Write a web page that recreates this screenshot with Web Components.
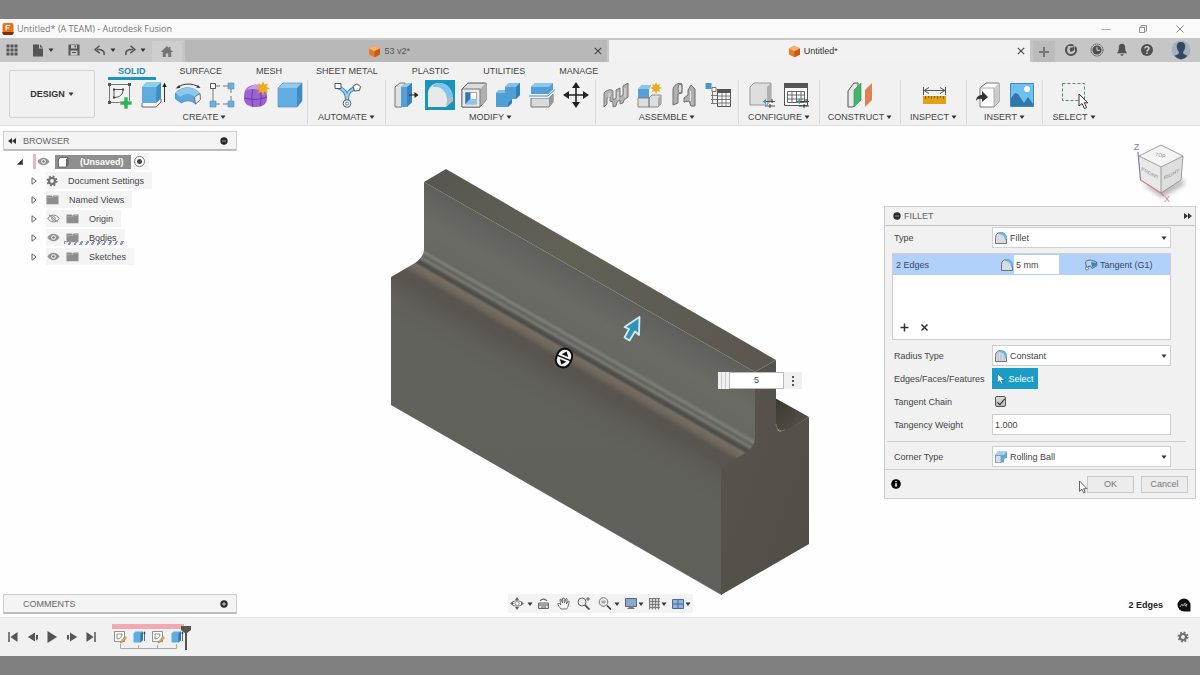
<!DOCTYPE html>
<html lang="en">
<head>
<meta charset="utf-8">
<title>Untitled* (A TEAM) - Autodesk Fusion</title>
<style>
  html { height: 100%; }
  body {
    margin: 0; min-height: 100%; box-sizing: border-box; padding: 19px 0;
    background: #808080; color: #444;
    font: 9px/12px "Liberation Sans", Arial, sans-serif;
    display: flex; flex-direction: column;
  }
</style>
</head>
<body>
<fusion-app></fusion-app>
<script>
const BASE = `
  *, *::before { box-sizing: border-box; }
  button, input, select { font: inherit; color: inherit; margin: 0; }
  button { border: 0; padding: 0; background: none; display: inline-flex; align-items: center; justify-content: center; cursor: pointer; }
  a { color: inherit; text-decoration: none; }
`;

function define(tag, css, html, init) {
  const template = document.createElement('template');
  template.innerHTML = `<style>${BASE}${css}</style>${html}`;
  customElements.define(tag, class extends HTMLElement {
    constructor() {
      super();
      this.attachShadow({ mode: 'open' }).append(template.content.cloneNode(true));
    }
    connectedCallback() { if (init) init.call(this, this.shadowRoot); }
  });
}

/* name: [width, height, drawing] */
const cubeBlue = `<path d="M2 7 7 2h19v18l-5 6H2z" fill="#62aee2"/><path d="M2 7 7 2h19l-5 5z" fill="#93cbf0"/><path d="m21 7 5-5v18l-5 6z" fill="#3d8cc6"/><path d="M2 7 7 2h19v18l-5 6H2z" fill="none" stroke="#5593c0" stroke-width=".7"/>`;
const miniFillet = `<path d="M1.500 12.500v-6C1.500 3 4 1.500 6.500 1.500c4 0 6 3 6 6v5z" fill="#d9dde1" stroke="#666" stroke-width=".9"/><path d="M5 1.500c5-.8 8 2 8 6.500l-2 1.500C11 5.500 9 3.500 5 3z" fill="#69b6e6"/>`;
const ICONS = {
  logo: [12, 14, `<rect x=".5" y="1" width="11" height="12" rx="2" fill="#e8731c"/><path d="M.5 10h11v1a2 2 0 0 1-2 2h-7a2 2 0 0 1-2-2z" fill="#7b2d10"/><path d="M4.200 8.500V3.500h4M4.200 6h3" stroke="#fff" fill="none" stroke-width="1.200"/>`],
  min: [10, 10, `<path d="M.5 5.500h9" stroke="#aaa"/>`],
  restore: [10, 10, `<path d="M1.500 3.500h5v5h-5zM3 3V1.500h5.500V7H7" fill="none" stroke="#777" stroke-width=".8"/>`],
  close: [10, 10, `<path d="m1.500 1.500 7 7m0-7-7 7" stroke="#777" stroke-width=".9"/>`],
  tabclose: [8, 8, `<path d="m.8.800 6.400 6.400m0-6.400L.8 7.200" stroke="#444" stroke-width="1.100"/>`],
  apps: [12, 12, `<g fill="#555"><path d="M.5.500h3v3h-3zM4.500.500h3v3h-3zM8.500.500h3v3h-3zM.5 4.500h3v3h-3zM4.500 4.500h3v3h-3zM8.500 4.500h3v3h-3zM.5 8.500h3v3h-3zM4.500 8.500h3v3h-3zM8.500 8.500h3v3h-3z"/></g>`],
  file: [12, 13, `<path d="M1 .5h6v4h4v8H1z" fill="#555"/><path d="M8 .5 11 3.500H8z" fill="#555"/>`],
  save: [12, 12, `<path d="M.5.500h11v11h-11z" fill="#555"/><path d="M3 1v3.500h6V1M2.500 11.500v-5h7v5" fill="#c6c6c6"/><path d="M6.500 1.500H8v2H6.500zM4 8h4v1H4z" fill="#555"/>`],
  undo: [12, 11, `<path d="M10 10c1-4-2-6-7-5.500" fill="none" stroke="#555" stroke-width="1.500"/><path d="M5.500.800 1 4.600l4.700 3.600" fill="none" stroke="#555" stroke-width="1.500"/>`],
  redo: [12, 11, `<path d="M2 10c-1-4 2-6 7-5.500" fill="none" stroke="#555" stroke-width="1.500"/><path d="M6.500.800 11 4.600 6.300 8.200" fill="none" stroke="#555" stroke-width="1.500"/>`],
  caret: [6, 6, `<path d="M.5 1.500h5L3 5z" fill="#333"/>`],
  home: [14, 13, `<path d="M7 1 .8 7h2v5h3V8.500h2.400V12h3V7h2L10.500 4.500V2H9v1z" fill="#757575"/>`],
  doc: [13, 13, `<path d="m1 3.500 5.500-2.800 5.500 2.800v6L6.500 12.300 1 9.500z" fill="#e87a24"/><path d="m1 3.500 5.500-2.800 5.500 2.800-5.500 2.700z" fill="#f8b26a"/><path d="M6.500 6.200v6.100L12 9.500v-6z" fill="#c65c14"/>`],
  plus: [12, 12, `<path d="M6 1v10M1 6h10" stroke="#777" stroke-width="2"/>`],
  ext: [14, 14, `<circle cx="7" cy="7" r="5" fill="none" stroke="#505050" stroke-width="2.200"/><path d="M5 6.500 3.500 2.500l3 1 2-.5L12 1.500l-1.500 4L11 9 7.500 9.500 5 9z" fill="#c6c6c6"/><path d="m6.500 9-1-3 1.200-1.800 1.500.6L9.800 3l.7 2.600L9.200 8z" fill="#505050"/>`],
  clock: [14, 14, `<circle cx="7" cy="7" r="6" fill="none" stroke="#505050" stroke-width="1" stroke-dasharray="1.500 .6"/><circle cx="7" cy="7" r="4.600" fill="#505050"/><path d="M7 4v3.300h2.800" stroke="#ddd" fill="none"/>`],
  bell: [12, 14, `<path d="M6 .8c-2 0-3.200 1.600-3.200 4C2.800 8 2 9 .8 10.300h10.400C10 9 9.200 8 9.200 4.800c0-2.400-1.200-4-3.200-4zM4.500 11.200h3c0 2-3 2-3 0z" fill="#505050"/>`],
  help: [14, 14, `<circle cx="7" cy="7" r="6" fill="#505050"/><path d="M5 5.500C5 3 9 3 9 5.400 9 7 7 6.800 7 8.500M7 9.500v1.500" fill="none" stroke="#ddd" stroke-width="1.400"/>`],
  avatar: [20, 20, `<circle cx="10" cy="10" r="9.500" fill="#a3b1c2"/><path d="M10 2c-3 0-4.500 2.200-4.200 5 .2 2.300 1.200 4 2.200 5l-.5 2-4 1.800A9.500 9.500 0 0 0 10 19.500a9.500 9.500 0 0 0 6.500-3.700l-4-1.800-.5-2c1-1 2-2.700 2.200-5C14.500 4.200 13 2 10 2z" fill="#33475f"/>`],

  sketch: [28, 28, `<path d="M3.500 3.500h20v18h-20z" fill="none" stroke="#777"/><path d="M2 2h3v3H2zM22 2h3v3h-3zM2 20h3v3H2z" fill="#555"/><path d="M8 16.500v-8h9c0 5-3 8-9 8z" fill="none" stroke="#555"/><path d="M7 7.500h2v2H7zM16 7.500h2v2h-2zM7 15.500h2v2H7z" fill="#444"/><path d="M18 16h4v4h4v4h-4v4h-4v-4h-4v-4h4z" fill="#2fb457" stroke="#f1f1f1" stroke-width=".6"/>`],
  extrude: [28, 28, `<path d="M2 22v4h14l5-5v-3H8z" fill="#f6f6f6" stroke="#666"/><path d="M2 6 6 1.500h15V17l-5 5H2z" fill="#60acdf"/><path d="M2 6 6 1.500h15L16.500 6z" fill="#94ccef"/><path d="m16.500 6 4.500-4.500V17l-5 5z" fill="#3d8cc6"/><path d="M24.500 21V4" stroke="#333"/><path d="m22.300 6 2.200-4.500L26.700 6z" fill="#222"/>`],
  revolve: [28, 28, `<path d="M1.500 12c7-7 17-7 24 0l1 6-5 5c-4-4-10-4-14-1L1.500 18z" fill="#5aa8de" stroke="#397fb4" stroke-width=".7"/><path d="M1.500 12c7-7 17-7 24 0l-5 4c-4-4-10-4-14 0z" fill="#8cc7ee"/><path d="m20.500 16 5.500-3.500.5 6-5 4.500z" fill="#eee" stroke="#666" stroke-width=".8"/><path d="M3 6.500C10 2 18 2 25 6" fill="none" stroke="#333"/><path d="m1.500 7.500 4-3.500.8 3zM26.500 7l-4.400-.5L24 4z" fill="#333"/>`],
  pattern: [28, 28, `<path d="M5 8v12M8 5h4M15 5h5M8 23h4M15 23h5M23 8v4M23 15v5" stroke="#777"/><path d="M2.500 2.500h5v5h-5z" fill="#fff" stroke="#555"/><path d="M20 2h6v6h-6zM2 20h6v6H2zM20 20h6v6h-6z" fill="#6eaedb" stroke="#4f91c0" stroke-width=".6"/>`],
  form: [28, 28, `<path d="M3 10c2-5 8-7 14-6 7 1 8 7 8 13s-4 9-11 9S2 23 2 18c0-3 0-5 1-8z" fill="#9b62d1"/><path d="M4 10c4-3 9-2 13-1 0-3 2-4 5-3-3-3-13-4-18 4z" fill="#c59cec"/><path d="M3 17c7 2 14 2 22-1M11 9c-2 5-1 12 0 17M18 10c2 5 1 11 0 15" stroke="#6d3aa5" fill="none"/><path d="m21 0 1.300 3.500L26 2.500l-1.600 3.300L28 7.500l-3.600 1.300L26 12l-3.700-1L21 14.500 19.700 11 16 12l1.500-3.200L14 7.500l3.500-1.700L16 2.500l3.700 1z" fill="#efab1e"/>`],
  box: [28, 28, cubeBlue],
  automate: [28, 28, `<path d="M5 6c6 3 9 5 9 14 0-9 3-11 9-13" fill="none" stroke="#4287bd" stroke-width="4"/><path d="M5 6c6 3 9 5 9 14 0-9 3-11 9-13" fill="none" stroke="#9ccbe9" stroke-width="2"/><path d="M2 2.500h6v5H2z" fill="#fff" stroke="#555"/><path d="m20 5 4-2 3.500 2.500-1 4-5 .5z" fill="#fff" stroke="#555"/><circle cx="14" cy="22.500" r="3.800" fill="#fff" stroke="#555"/><circle cx="14" cy="22.500" r="1.500" fill="none" stroke="#4287bd"/>`],
  press: [28, 28, `<path d="m3 6 5-4h5v20l-3 4H3z" fill="#e1e1e1" stroke="#777"/><path d="m9 6 5-4h6v19l-5 5H9z" fill="#559fd6"/><path d="m9 6 5-4h6l-5 4z" fill="#93cbf0"/><path d="m15 6 5-4v19l-5 5z" fill="#3883bd"/><path d="M17 14h7" stroke="#222"/><path d="m22.500 11 4 3-4 3z" fill="#222"/>`],
  fillet: [30, 30, `<path d="M0 0h30v30H0z" fill="#1695bd"/><path d="M3 26V14C3 6 9 3 14 3c8 0 13 6 13 14v4l-6 6H3z" fill="#dedede"/><path d="M8 5c5-4 18-3 20 11l-6 5C22 12 17 7 8 7z" fill="#7fc4ec"/><path d="M3 27V14C3 9 6 7 10 7c8 0 12 6 12 15l-2 5z" fill="#e9e9e9"/><path d="m22 21 6-5v5l-7 6z" fill="#bbb"/>`],
  shell: [28, 28, `<path d="m2 8 6-6h18v17l-6 7H2z" fill="#dcdcdc" stroke="#555"/><path d="m20 8 6-6v17l-6 7z" fill="#b0b0b0"/><path d="M2 8h18v18H2z" fill="#e9e9e9" stroke="#777"/><path d="M5.500 11.500h11V23h-11z" fill="#fff" stroke="#777" stroke-width=".6"/><path d="M5.500 11.500v11.500l5-5v-6.500z" fill="#2d76b3"/><path d="M5.500 23 10.500 18h6v5z" fill="#8cc7ee"/>`],
  combine: [28, 28, `<path d="m2 12 3-3h6V6l4-4h11v12l-4 4h-4v4l-4 4H2z" fill="#4f9ed7"/><path d="m11 6 4-4h11l-4 4zM2 12l3-3h6v3z" fill="#83c0ea"/><path d="m22 6 4-4v12l-4 4zM14 22l4-4v4l-4 4z" fill="#347fba"/>`],
  split: [28, 28, `<path d="m3 6 4-4h18v7l-4 4H3z" fill="#559fd6"/><path d="m3 6 4-4h18l-4 4z" fill="#8cc7ee"/><path d="M3 17h18l4-4v8l-4 5H3z" fill="#dadada" stroke="#777"/><path d="m21 17 4-4v8l-4 5z" fill="#999"/><path d="M1 15.500h19l7-7" fill="none" stroke="#f1f1f1" stroke-width="3"/><path d="M1 15h19l7-6.500" fill="none" stroke="#4b93c9"/>`],
  move: [28, 28, `<path d="M14 3v22M3 14h22" stroke="#222" stroke-width="1.600"/><path d="m14 1-4 6h8zM14 27l-4-6h8zM1 14l6-4v8zM27 14l-6-4v8z" fill="#222"/>`],
  snap: [28, 28, `<path d="M2 26V13c0-3 7-6 9-3v9l3-2V9l4-2v9l3-2V5l5-3v14l-4 3-1 3-3 1v-4l-3 2-1 4-3 1v-5l-3-1v-4l-3 1v6z" fill="#b4b4b4" stroke="#6d6d6d" stroke-width=".9"/><path d="M7 12v6M16 11v8M23 7v9" stroke="#e5e5e5"/>`],
  component: [28, 28, `<path d="m2 8 4-4h9l-2 4v9H2z" fill="#579fd5"/><path d="m2 8 4-4h9l-2 4z" fill="#8cc7ee"/><path d="M2 17h11v9H2zM13 17l3-3h9v9l-3 3h-9z" fill="#dedede" stroke="#777" stroke-width=".8"/><path d="m22 17 3-3v9l-3 3z" fill="#aaa"/><path d="m20 1 1.200 3L24 3l-1 2.800L26 7l-3 1.200L24 11l-2.800-1L20 13l-1.200-3-2.800 1 1-2.800L14 7l3-1.200L16 3l2.800 1z" fill="#efab1e"/>`],
  joint: [28, 28, `<path d="M3 24V9c0-5 6-8 9-6v9l-4 1v9zM25 25V8l-4-4-3 5v5l-4 3v4l5-1 2 5z" fill="#b0b0b0" stroke="#6e6e6e"/><ellipse cx="10" cy="7.500" rx="2" ry="4.500" fill="#dcdcdc" stroke="#777"/><path d="M20.500 10v10" stroke="#e5e5e5"/>`],
  bom: [28, 28, `<path d="M8.500 8v15M7 14.500h6M7 18.500h6M7 22.500h6" stroke="#777" fill="none"/><path d="M1.500 2h6v6h-6z" fill="#4f93c8"/><path d="M8 6.500h4v4H8z" fill="#fff" stroke="#777"/><path d="M13.500 8.500h13v17h-13z" fill="#fff" stroke="#555"/><path d="M13 8h14v4H13z" fill="#555"/><path d="M13.500 15h13M13.500 18.500h13M13.500 22h13M18 12v13.500M22 12v13.500" stroke="#777"/>`],
  config: [28, 28, `<path d="m2 6 4-4h17v17l-4 5H2z" fill="#dedede" stroke="#999"/><path d="m19 6 4-4v17l-4 5z" fill="#aeaeae"/><path d="M15 20.500h12M17 25h10" stroke="#555" stroke-width="1.200"/><path d="m18 17.500-3 3 3 3" fill="#4691bc"/><path d="M24 18v4M22 23v4" stroke="#333"/>`],
  configtable: [28, 28, `<path d="M2.500 2.500h23v22h-23z" fill="#fff" stroke="#555"/><path d="M2 2h24v5H2z" fill="#555"/><path d="M5.500 10.500h17v11h-17zM5.500 14h17M5.500 18h17M10 10.500v11M14.500 10.500v11M19 10.500v11" fill="none" stroke="#666"/><path d="M15 20.500h12M17 25h10" stroke="#444" stroke-width="1.200"/><path d="m18 17.500-3 3 3 3" fill="#4691bc"/><path d="M24 18v4M22 23v4" stroke="#333"/>`],
  plane: [28, 28, `<path d="m2 10 6-8h4v18l-5 6H2z" fill="#e8e8e8" stroke="#555"/><path d="m8 9 7-7v17l-7 7z" fill="#42b56a" stroke="#308e50" stroke-width=".6"/><path d="m19 9 7-7v17l-7 7z" fill="#dc8153"/>`],
  measure: [28, 28, `<path d="M3.500 6v8M25.500 6v8M5 9.500h19" stroke="#555"/><path d="m9 6.500-5 3 5 3M20 6.500l5 3-5 3" fill="none" stroke="#555"/><path d="M3 15h23v8H3z" fill="#e3a117"/><path d="M5.500 15v3M8.500 15v2M11.500 15v3M14.500 15v2M17.500 15v3M20.500 15v2M23.500 15v3" stroke="#8c6000"/>`],
  insert: [28, 28, `<path d="m6 7 6-5h13v19l-5 5H6z" fill="#fff" stroke="#777"/><path d="m20 7 5-5v19l-5 5z" fill="#ccc"/><path d="M6 7h14v19" fill="none" stroke="#aaa"/><path d="M2 20c0-4 3-6 6-6v-4l6 6-6 5v-3c-3-.5-5 0-6 2z" fill="#333"/>`],
  image: [28, 28, `<path d="M2.500 2.500h23v23h-23z" fill="#6fc0ee" stroke="#438bbc"/><circle cx="19" cy="8" r="3" fill="#fff"/><path d="M3 25V17l4-5 3 1 6 9 4-6 5 7v2z" fill="#2e78ac"/>`],
  select: [28, 28, `<path d="M2.500 2.500h22v17h-22z" fill="none" stroke="#3c9a56" stroke-dasharray="3 2"/><path d="M19 13v12l3-2.500 2.500 5 2-1-2.200-4.700h3.600z" fill="#fff" stroke="#333" stroke-width="1"/>`],

  collapse: [10, 8, `<path d="M5 1v6L1 4zM9 1v6L5 4z" fill="#333"/>`],
  expand: [10, 8, `<path d="M1 1v6l4-3zM5 1v6l4-3z" fill="#333"/>`],
  minus: [8, 8, `<circle cx="4" cy="4" r="3.700" fill="#2b2b2b"/><path d="M2 4h4" stroke="#999"/>`],
  plusdot: [8, 8, `<circle cx="4" cy="4" r="3.700" fill="#2b2b2b"/><path d="M2 4h4M4 2v4" stroke="#ccc"/>`],
  open: [8, 8, `<path d="M6.800.800v6H.8z" fill="#333"/>`],
  twist: [6, 8, `<path d="M1 .8 5.200 4 1 7.200z" fill="#fff" stroke="#555" stroke-width=".9"/>`],
  eye: [13, 9, `<path d="M.5 4.500c3-5 9-5 12 0-3 5-9 5-12 0z" fill="#929292"/><circle cx="6.500" cy="4.500" r="2.300" fill="#fff"/><circle cx="6.500" cy="4.500" r="1.300" fill="#777"/>`],
  eyeoff: [13, 9, `<path d="M.8 4.500c3-4.500 8.500-4.500 11.400 0-3 4.500-8.500 4.500-11.400 0z" fill="none" stroke="#888"/><circle cx="6.500" cy="4.500" r="1.800" fill="none" stroke="#888"/><path d="m2 .8 9 7.500" stroke="#888"/>`],
  body: [12, 12, `<path d="m1.500 3 2-1.500H11V9l-2 2H1.500z" fill="#fff" stroke="#555" stroke-width=".8"/><path d="M9 3.200 11 1.500V9L9 11z" fill="#667"/>`],
  gear: [12, 12, `<circle cx="6" cy="6" r="3" fill="none" stroke="#707070" stroke-width="2.200"/><circle cx="6" cy="6" r="4.700" fill="none" stroke="#707070" stroke-width="1.600" stroke-dasharray="1.850 1.850"/>`],
  folder: [13, 11, `<path d="M.5 1.500h5l1 1.200 1-1.200h5v8.800H.5z" fill="#8d8d8d"/><path d="M.5 3.600h7l1-1.200h4" stroke="#bbb" stroke-width=".6" fill="none"/>`],

  orbit: [15, 14, `<path d="M7 1v11M1.500 6.500h11" stroke="#888" stroke-dasharray="3 2"/><ellipse cx="7" cy="6.500" rx="5.500" ry="2.600" fill="none" stroke="#777"/><path d="m7 0-2 3h4zM7 13l-2-3h4zM0 6.500l3-2v4zM14 6.500l-3-2v4z" fill="#666"/><circle cx="7" cy="6.500" r="2" fill="#fff" stroke="#888" stroke-width=".7"/>`],
  look: [13, 12, `<path d="M1.500 5h10v5.500h-10z" fill="#ddd" stroke="#666"/><path d="M2 7h9M4 9h5" stroke="#666" stroke-width="1.200"/><path d="M3 3c2-2.500 5-2.500 7 0" fill="none" stroke="#666" stroke-width="1.200"/>`],
  hand: [13, 13, `<path d="M4 12C2.500 10 1 8.500.8 6.500l1.500-.3L3.800 8 3 2.500l1.200-.3L5.500 6l.2-5H7l.5 5L9 1.500l1.200.3L9.500 7l1.700-3 1 .5C11.500 8 11 10.500 9.500 12z" fill="#fafafa" stroke="#666" stroke-width=".9"/>`],
  zoom: [14, 13, `<circle cx="5" cy="5" r="4" fill="#eee" stroke="#666"/><path d="m8 8 4.500 4.500" stroke="#444" stroke-width="1.700"/><path d="M11 0v4M9 2h4" stroke="#555" stroke-width=".9"/>`],
  fit: [14, 13, `<circle cx="5.500" cy="5" r="4.300" fill="#eee" stroke="#777"/><path d="M3.500 3.500h4v3h-4z" fill="#aaa"/><path d="m9 8.500 4 4" stroke="#444" stroke-width="1.700"/>`],
  display: [14, 13, `<path d="M1.500 1.500h11v8h-11z" fill="#86a9cf" stroke="#56677c"/><path d="M5 9.500h4v2H5zM3.500 11.500h7" fill="#777" stroke="#777"/>`],
  grid: [13, 13, `<path d="M1 1h11v11H1z" fill="#d4d4d4"/><path d="M1.500 1v11.500M4.500 1v11.500M7.500 1v11.500M10.500 1v11.500M1 1.500h11M1 4.500h11M1 7.500h11M1 10.500h11" stroke="#777" stroke-width=".9"/>`],
  views: [14, 12, `<path d="M1.500 1.500h11v9h-11z" fill="#8bb4de" stroke="#4c6d92"/><path d="M7 1.500v9M1.500 6h11" stroke="#4c6d92"/>`],

  first: [12, 12, `<path d="M2 1v10" stroke="#555" stroke-width="1.500"/><path d="M10.500 1v10L3.500 6z" fill="#555"/>`],
  prev: [12, 12, `<path d="M8 1.500v9L.8 6zM9 4h2v4l-2 1.500z" fill="#555"/>`],
  play: [12, 14, `<path d="M1.500 1v12L11 7z" fill="#555"/>`],
  next: [12, 12, `<path d="M4 1.500v9L11.200 6zM1 4h2v4.500H1z" fill="#555"/>`],
  last: [12, 12, `<path d="M10 1v10" stroke="#555" stroke-width="1.500"/><path d="M1.500 1v10l7-5z" fill="#555"/>`],
  tsketch: [14, 14, `<path d="M1.500 1.500h10v10h-10z" fill="#fff" stroke="#777" stroke-width=".8"/><path d="M4 9V4h5c0 3-2 5-5 5z" fill="none" stroke="#777" stroke-width=".8"/><path d="m7.500 11.500 4.500-5 1.500 1.300-4.300 4.700-2 .5z" fill="#e3a24b" stroke="#8a6330" stroke-width=".4"/>`],
  textrude: [14, 14, `<path d="m1.500 3.500 2-2H11V10l-2.500 2.500h-7z" fill="#5fade0"/><path d="m8.500 3.500 2.500-2V10l-2.500 2.500z" fill="#2c76ac"/><path d="M12.500 11V3" stroke="#444" stroke-width=".8"/><path d="m11.200 3.500 1.300-2.300 1.200 2.300z" fill="#333"/>`],

  sfillet: [14, 14, miniFillet],
  sconst: [14, 14, miniFillet + `<path d="M4 2v10M7 4v8M10 5v7" stroke="#9ab6c9" stroke-width=".8"/>`],
  ball: [14, 14, `<path d="m1 5 3-3.500h9V8l-3 1v3.500H1z" fill="#5fa9da"/><path d="m1 5 3-3.500h9L10 5z" fill="#a3d3ef"/><path d="M1.500 5.500H7v7H1.500z" fill="#ddd" stroke="#6f8fa5" stroke-width=".6"/>`],
  tangent: [14, 12, `<path d="M2.500 9 1.500 3c3-3 6-2 11 0l.5 3.500L8 9.500 6.500 7 4 7.500z" fill="#bcd5ef" stroke="#46586e" stroke-width=".9"/><path d="m7 3 5.500 1v2.500L8 8z" fill="#3f83bb"/><circle cx="3" cy="9.500" r="1.500" fill="#fff" stroke="#46586e" stroke-width=".7"/>`],
  add: [9, 9, `<path d="M4.500.500v8M.5 4.500h8" stroke="#333" stroke-width="1.500"/>`],
  remove: [9, 9, `<path d="m1.500 1.500 6 6m0-6-6 6" stroke="#333" stroke-width="1.500"/>`],
  pointer: [10, 12, `<path d="M1.500.500v9l2.200-1.800L5.300 11l1.600-.8-1.500-3.100h3z" fill="#fff" stroke="#15536b" stroke-width=".5"/>`],
  info: [10, 10, `<circle cx="5" cy="5" r="4.800" fill="#000"/><path d="M5 4.300v3.500M5 2v1.300" stroke="#fff" stroke-width="1.500"/>`],
  badge: [14, 14, `<path d="M7 .5A6.500 6.500 0 1 0 7 13.500h6.500V7A6.500 6.500 0 0 0 7 .5z" fill="#111"/><path d="m3 9 2-3 1 2 2-3v3l2-2-1 3" fill="none" stroke="#bbb" stroke-width=".8"/>`],
  cursor: [10, 14, `<path d="M1.500 1v10.500L4 9.300l1.800 3.600 1.500-.7-1.700-3.500H9z" fill="#fff" stroke="#555" stroke-width=".9"/>`],
};

customElements.define('ui-icon', class extends HTMLElement {
  constructor() { super(); this.attachShadow({ mode: 'open' }); }
  connectedCallback() {
    const [w, h, body] = ICONS[this.getAttribute('name')];
    this.shadowRoot.innerHTML =
      `<style>:host{display:inline-flex;flex:none}svg{display:block}</style>
       <svg width="${w}" height="${h}" viewBox="0 0 ${w} ${h}" aria-hidden="true">${body}</svg>`;
  }
});

define('title-bar', `
  :host { display: flex; align-items: center; height: 19px; flex: none; background: #fafafa; padding: 0 15px 0 2px; color: #777;
    font: 9px/12px "Open Sans", "Noto Sans", sans-serif; }
  .name { flex: 1; margin-left: 3px; }
  .win { display: flex; gap: 27px; }
`, `
  <ui-icon name="logo"></ui-icon><span class="name"><slot></slot></span>
  <div class="win">
    <button aria-label="Minimize"><ui-icon name="min"></ui-icon></button>
    <button aria-label="Restore"><ui-icon name="restore"></ui-icon></button>
    <button aria-label="Close"><ui-icon name="close"></ui-icon></button>
  </div>`);

define('doc-tab', `
  :host { flex: 1; display: flex; align-items: center; height: 22px; background: #b8b8b8; color: #555; padding-right: 5px; }
  :host([active]) { background: #f2f2f2; color: #333; }
  .label { flex: 1; display: flex; justify-content: center; align-items: center; gap: 3px; }
`, `<a class="label" href="#"><ui-icon name="doc"></ui-icon><span><slot></slot></span></a>
  <button aria-label="Close tab"><ui-icon name="tabclose"></ui-icon></button>`);

define('tab-strip', `
  :host { display: flex; align-items: flex-end; height: 24px; flex: none; background: #c6c6c6; }
  .quick, .right { display: flex; align-items: center; height: 24px; }
  .quick { width: 152px; padding-left: 6px; }
  .quick button { gap: 4px; }
  .quick button + button { margin-left: 14px; }
  .quick button + .tight { margin-left: 8px; }
  .home { width: 30px; height: 21px; background: #cecece; margin-right: 3px; }
  .tabs { flex: 1; display: flex; gap: 2px; }
  .new { width: 22px; height: 21px; background: #bcbcbc; margin: 0 9px 0 3px; }
  .right { gap: 12px; padding-right: 9px; }
  .user { margin-left: 5px; }
`, `
  <div class="quick">
    <button aria-label="Data panel"><ui-icon name="apps"></ui-icon></button>
    <button aria-label="File"><ui-icon name="file"></ui-icon><ui-icon name="caret"></ui-icon></button>
    <button aria-label="Save"><ui-icon name="save"></ui-icon></button>
    <button aria-label="Undo"><ui-icon name="undo"></ui-icon><ui-icon name="caret"></ui-icon></button>
    <button class="tight" aria-label="Redo"><ui-icon name="redo"></ui-icon><ui-icon name="caret"></ui-icon></button>
  </div>
  <button class="home" aria-label="Home"><ui-icon name="home"></ui-icon></button>
  <div class="tabs"><doc-tab>53 v2*</doc-tab><doc-tab active>Untitled*</doc-tab></div>
  <button class="new" aria-label="New tab"><ui-icon name="plus"></ui-icon></button>
  <div class="right">
    <button aria-label="Extensions"><ui-icon name="ext"></ui-icon></button>
    <button aria-label="Job status"><ui-icon name="clock"></ui-icon></button>
    <button aria-label="Notifications"><ui-icon name="bell"></ui-icon></button>
    <button aria-label="Help"><ui-icon name="help"></ui-icon></button>
    <button class="user" aria-label="Account"><ui-icon name="avatar"></ui-icon></button>
  </div>`);

define('ribbon-group', `
  :host { display: flex; flex-direction: column; align-items: center; position: relative; height: 44px; border-right: 1px solid #dadada; }
  :host(:last-child) { border-right: 0; }
  .icons { display: flex; flex: none; height: 30px; }
  .icons button { width: 34px; }
  .menu { flex: none; height: 14px; gap: 2px; }
`, `<div class="icons"></div><button class="menu"><slot></slot><ui-icon name="caret"></ui-icon></button>`,
function (root) {
  root.querySelector('.icons').innerHTML = this.getAttribute('icons').split(' ')
    .map(n => `<button aria-label="${n}"><ui-icon name="${n}"></ui-icon></button>`).join('');
});

define('tool-ribbon', `
  :host { display: flex; height: 64px; flex: none; background: #f1f1f1; border-bottom: 1px solid #dcdcdc; box-sizing: border-box; }
  .design { width: 86px; height: 48px; margin: 8px 7px 0 9px; border: 1px solid #d2d2d2; border-radius: 2px; font-weight: bold; gap: 3px; color: #333; }
  .tabs { display: flex; gap: 14px; height: 18px; margin-left: 6px; }
  .tabs a { padding: 3px 10px 0; }
  .tabs a.on { color: #1c8cb4; font-weight: bold; border-bottom: 3px solid #1c96bd; }
  .groups { display: grid; grid-template-columns: 206px 78px 210px 143px 81px 81px 66px 76px 62px; }
`, `
  <button class="design">DESIGN <ui-icon name="caret"></ui-icon></button>
  <div>
    <nav class="tabs"><a class="on" href="#">SOLID</a><a href="#">SURFACE</a><a href="#">MESH</a><a href="#">SHEET METAL</a><a href="#">PLASTIC</a><a href="#">UTILITIES</a><a href="#">MANAGE</a></nav>
    <div class="groups">
      <ribbon-group icons="sketch extrude revolve pattern form box">CREATE</ribbon-group>
      <ribbon-group icons="automate">AUTOMATE</ribbon-group>
      <ribbon-group icons="press fillet shell combine split move">MODIFY</ribbon-group>
      <ribbon-group icons="snap component joint bom">ASSEMBLE</ribbon-group>
      <ribbon-group icons="config configtable">CONFIGURE</ribbon-group>
      <ribbon-group icons="plane">CONSTRUCT</ribbon-group>
      <ribbon-group icons="measure">INSPECT</ribbon-group>
      <ribbon-group icons="insert image">INSERT</ribbon-group>
      <ribbon-group icons="select">SELECT</ribbon-group>
    </div>
  </div>`);

define('panel-header', `
  :host { display: flex; align-items: center; box-sizing: border-box; height: 20px; background: #f4f4f4; border: 1px solid #cfcfcf; border-bottom: 2px solid #bdbdbd; color: #666; padding: 0 8px 0 3px; }
  .lead { width: 16px; display: flex; }
  .t { flex: 1; }
`, `<span class="lead"><slot name="lead"></slot></span><span class="t"><slot></slot></span><slot name="end"></slot>`);

define('tree-row', `
  :host { display: flex; align-items: center; height: 19px; padding-left: 28px; }
  .twist { width: 6px; margin-right: 9px; }
  .body { display: flex; align-items: center; height: 17px; gap: 10px; background: #f4f4f4; padding-right: 8px; }
`, `<button class="twist" aria-label="Expand"><ui-icon name="twist"></ui-icon></button><div class="body"><slot></slot></div>`);

define('browser-panel', `
  :host { display: block; width: 234px; }
  .root { display: flex; align-items: center; height: 19px; margin-top: 1px; padding-left: 13px; }
  .bar { width: 3px; height: 15px; background: #f0b4bb; margin: 0 1px 0 9px; }
  .sel { display: flex; align-items: center; width: 76px; height: 14px; background: #8f8f8f; color: #fff; font-weight: bold; margin: 0 3px 0 5px; padding-left: 2px; gap: 11px; }
  .rad { background: #f4f4f4; display: flex; padding: 3px 4px 3px 0; }
  .rad input { appearance: none; margin: 0; width: 11px; height: 11px; border: 1px solid #777; border-radius: 50%; background: radial-gradient(circle, #444 2px, #fff 3px); }
  .pair { display: flex; gap: 6px; align-items: center; padding-left: 1px; }
  .hatch { position: relative; display: flex; align-items: center; gap: 10px; }
  .hatch::before { content: ""; position: absolute; left: 18px; right: -8px; bottom: -1px; height: 4px; background: repeating-linear-gradient(120deg, #8b99b6 0 2px, transparent 2px 5px); }
`, `
  <panel-header><ui-icon slot="lead" name="collapse"></ui-icon>BROWSER<button slot="end" aria-label="Collapse"><ui-icon name="minus"></ui-icon></button></panel-header>
  <div class="root"><ui-icon name="open"></ui-icon><span class="bar"></span><ui-icon name="eye"></ui-icon>
    <span class="sel"><ui-icon name="body"></ui-icon><span>(Unsaved)</span></span>
    <label class="rad"><input type="radio" checked aria-label="Activate component"></label></div>
  <tree-row><ui-icon name="gear"></ui-icon><span>Document Settings</span></tree-row>
  <tree-row><ui-icon name="folder"></ui-icon><span>Named Views</span></tree-row>
  <tree-row><span class="pair"><ui-icon name="eyeoff"></ui-icon><ui-icon name="folder"></ui-icon></span><span>Origin</span></tree-row>
  <tree-row><span class="hatch"><span class="pair"><ui-icon name="eye"></ui-icon><ui-icon name="folder"></ui-icon></span><span>Bodies</span></span></tree-row>
  <tree-row><span class="pair"><ui-icon name="eye"></ui-icon><ui-icon name="folder"></ui-icon></span><span>Sketches</span></tree-row>`);

define('nav-bar', `
  :host { display: flex; align-items: center; height: 19px; background: #f3f3f3; padding: 0 2px; }
  .b { height: 19px; margin-right: 7px; }
  .menu { margin-right: 4px; }
  .wide { gap: 2px; }
  .b:last-child { margin-right: 0; }
`, `
  <button class="b menu wide" aria-label="Orbit"><ui-icon name="orbit"></ui-icon><ui-icon name="caret"></ui-icon></button>
  <button class="b" aria-label="Look at"><ui-icon name="look"></ui-icon></button>
  <button class="b" aria-label="Pan"><ui-icon name="hand"></ui-icon></button>
  <button class="b" aria-label="Zoom"><ui-icon name="zoom"></ui-icon></button>
  <button class="b menu wide" aria-label="Fit"><ui-icon name="fit"></ui-icon><ui-icon name="caret"></ui-icon></button>
  <button class="b menu" aria-label="Display settings"><ui-icon name="display"></ui-icon><ui-icon name="caret"></ui-icon></button>
  <button class="b menu" aria-label="Grid and snaps"><ui-icon name="grid"></ui-icon><ui-icon name="caret"></ui-icon></button>
  <button class="b menu" aria-label="Viewports"><ui-icon name="views"></ui-icon><ui-icon name="caret"></ui-icon></button>`);

define('view-cube', `
  :host { display: block; }
  svg { display: block; }
  text { font: 5px "Liberation Sans", Arial, sans-serif; fill: #888; text-anchor: middle; }
  .ax { font-size: 9px; }
`, `<svg width="60" height="68" viewBox="1130 138 60 68">
    <defs><filter id="s" x="-30%" y="-30%" width="160%" height="160%"><feGaussianBlur stdDeviation="2"/></filter></defs>
    <path d="m1142 184 20 14 22-13v-6l-22 8z" fill="#bbb" filter="url(#s)"/>
    <path d="m1139 156 22-11 22 11-22 11z" fill="#f4f4f4"/>
    <path d="m1139 156 22 11v26l-20-13z" fill="#e9e9e9"/>
    <path d="m1183 156-22 11v26l20-13z" fill="#dedede"/>
    <path d="m1139 156 22-11 22 11-2 24-20 13M1139 156l22 11 22-11M1161 167v26" fill="none" stroke="#888" stroke-width=".8"/>
    <path d="M1138 152l2.500 28" stroke="#7a79b8" stroke-width="1.200"/>
    <path d="m1140.500 180 20.500 13 3 3" fill="none" stroke="#cf7b86" stroke-width="1.200"/>
    <text transform="translate(1160 157) rotate(14)">TOP</text>
    <text transform="translate(1150 175) skewY(28)">FRONT</text>
    <text transform="translate(1171.500 176) skewY(-28)">RIGHT</text>
    <text class="ax" x="1136.500" y="150" style="fill:#7d7cc0">Z</text>
    <text class="ax" x="1167" y="202" style="fill:#dd8790">X</text>
  </svg>`);

define('model-view', `
  :host { display: block; }
  svg { display: block; width: 100%; height: 100%; }
`, `<svg viewBox="0 126 1200 491" role="img" aria-label="Solid body with filleted step">
    <defs>
      <linearGradient id="wall" gradientUnits="userSpaceOnUse" x1="590" y1="277" x2="556" y2="336">
        <stop offset="0" stop-color="#5f605b"/><stop offset=".5" stop-color="#6a6b65"/><stop offset="1" stop-color="#666761"/></linearGradient>
      <linearGradient id="top" gradientUnits="userSpaceOnUse" x1="430" y1="175" x2="770" y2="370">
        <stop offset="0" stop-color="#58574f"/><stop offset=".4" stop-color="#636056"/><stop offset="1" stop-color="#5b574f"/></linearGradient>
      <linearGradient id="front" gradientUnits="userSpaceOnUse" x1="424" y1="249" x2="386" y2="315">
        <stop offset="0" stop-color="#6c6d67"/><stop offset=".04" stop-color="#7d7e78"/><stop offset=".08" stop-color="#62635d"/>
        <stop offset=".12" stop-color="#797973"/><stop offset=".16" stop-color="#54524d"/><stop offset=".19" stop-color="#4e4b46"/>
        <stop offset=".23" stop-color="#746d64"/><stop offset=".29" stop-color="#6f675e"/><stop offset=".37" stop-color="#59544e"/>
        <stop offset=".5" stop-color="#5a5550"/><stop offset=".75" stop-color="#605f59"/><stop offset="1" stop-color="#62635d"/></linearGradient>
      <linearGradient id="base" x1="0" y1="0" x2="0" y2="1"><stop offset="0" stop-color="#5e5f59" stop-opacity="0"/><stop offset="1" stop-color="#5b5c57"/></linearGradient>
      <linearGradient id="back" x1="0" y1="0" x2="1" y2="1"><stop offset="0" stop-color="#3a372f"/><stop offset="1" stop-color="#5b564c"/></linearGradient>
      <linearGradient id="end" x1="0" y1="0" x2="1" y2="1"><stop offset="0" stop-color="#59554e"/><stop offset="1" stop-color="#514d46"/></linearGradient>
    </defs>
    <path d="M775 398 809 417 783 433 775 428z" fill="url(#back)"/>
    <path d="M424 249 756 438V460L722 480V595L391 405V277L415 263Q424 257 424 249z" fill="url(#front)"/>
    <path d="M391 277 721 467V595L391 405z" fill="url(#base)" opacity=".5"/>
    <path d="M424 182 755 372V439L424 250z" fill="url(#wall)"/>
    <path d="M424 182 446 169 776 360 755 372z" fill="url(#top)"/>
    <path d="M755 372 776 360V425Q777 434 785 431L809 417V544L721 595V467L742 455Q755 448 755 438z" fill="url(#end)"/>
    <path d="M776 424Q777 433 785 430" fill="none" stroke="#817c71" stroke-width=".8"/>
    <path d="M639.500 317 624.500 327 629 329 624.500 337.500 629.500 340.500 635 331.500 639 335z" fill="#2f93b8" stroke="#d4eaf3" stroke-width="1.800" stroke-linejoin="round"/>
    <g transform="rotate(22 564 358)"><rect x="556.500" y="348.500" width="15" height="19" rx="7.500" fill="#f4f4f4" stroke="#0c0c0c" stroke-width="2"/>
      <path d="M557 358h14" stroke="#0c0c0c" stroke-width="1.400"/><path d="m560.500 355.500 3.500-4.500 3.500 4.500zM560.500 360.500l3.500 4.500 3.500-4.500z" fill="#0c0c0c"/></g>
  </svg>`);

define('value-box', `
  :host { display: flex; width: 84px; height: 17px; background: #f0f0f0; }
  .grip { width: 11px; background: repeating-linear-gradient(90deg, #f0f0f0 0 3px, #ccc 3px 4px); }
  input { width: 55px; height: 17px; border: 1px solid #bbb; background: #fff; text-align: center; padding: 0; }
  button { flex: 1; }
`, `<span class="grip"></span><input value="5" aria-label="Radius">
   <button aria-label="More"><svg width="4" height="11" viewBox="0 0 4 11"><path d="M1 1h2v2H1zM1 5h2v2H1zM1 9h2v2H1z" fill="#555"/></svg></button>`);

define('option-select', `
  :host { display: flex; }
  .w { flex: 1; display: flex; align-items: center; height: 21px; border: 1px solid #d0d0d0; background: #fff; padding: 0 3px 0 1px; }
  select { appearance: none; flex: 1; border: 0; background: none; padding: 0 2px; height: 19px; outline: 0; }
`, `<div class="w"><select></select><ui-icon name="caret"></ui-icon></div>`,
function (root) {
  const select = root.querySelector('select');
  if (select.options.length) return;
  const icon = document.createElement('ui-icon');
  icon.setAttribute('name', this.getAttribute('icon'));
  select.before(icon);
  select.add(new Option(this.getAttribute('value')));
  select.setAttribute('aria-label', this.getAttribute('label'));
});

define('fillet-panel', `
  :host { display: block; background: #f1f1f1; border: 1px solid #cfcfcf; position: relative; }
  .head { display: flex; align-items: center; gap: 3px; height: 19px; padding: 0 2px 0 8px; border-bottom: 1px solid #c4c4c4; color: #666; }
  .head span { flex: 1; }
  .form { padding: 0 24px 0 7px; }
  .row { display: grid; grid-template-columns: 98px 1fr; align-items: center; height: 23px; padding-left: 2px; }
  .row > :first-child { white-space: nowrap; }
  .list { height: 87px; margin: 4px 0; background: #fff; border: 1px solid #cfcfcf; display: flex; flex-direction: column; }
  .item { display: flex; align-items: center; height: 21px; background: #b1d0fa; padding-left: 3px; color: #34496a; }
  .item .n { width: 104px; }
  .item input { width: 45px; height: 19px; border: 0; padding: 0 2px; background: #fff; color: #444; }
  .item .g { display: flex; gap: 2px; margin-left: 25px; align-items: center; }
  .tools { margin-top: auto; display: flex; gap: 11px; padding: 0 0 7px 7px; }
  .pick { width: 46px; height: 21px; background: #1b9cc7; color: #fff; gap: 2px; }
  .check { appearance: none; width: 11px; height: 11px; margin: 0 0 0 3px; border: 1px solid #555; border-radius: 2px;
    background: linear-gradient(#ddd, #bbb); display: grid; place-items: center; }
  .check:checked::before { content: ""; width: 4px; height: 8px; margin-top: -2px; border: solid #222; border-width: 0 1px 1px 0; transform: rotate(40deg); }
  .num { height: 21px; border: 1px solid #cfcfcf; padding: 0 2px; background: #fff; width: 100%; }
  .rule { height: 1px; background: #cfcfcf; margin: 5px 9px 3px 2px; }
  .foot { display: flex; align-items: center; height: 29px; margin-top: 1px; border-top: 1px solid #cfcfcf; padding: 0 7px 0 6px; gap: 7px; color: #777; }
  .foot ui-icon { margin-right: auto; }
  .foot button { height: 17px; width: 47px; border: 1px solid #c8c8c8; background: #ececec; }
  .cur { position: absolute; right: 107px; bottom: 4px; }
`, `
  <div class="head"><ui-icon name="minus"></ui-icon><span>FILLET</span><button aria-label="Expand"><ui-icon name="expand"></ui-icon></button></div>
  <div class="form">
    <div class="row"><span>Type</span><option-select icon="sfillet" value="Fillet" label="Type"></option-select></div>
    <div class="list">
      <div class="item"><span class="n">2 Edges</span><ui-icon name="sfillet"></ui-icon><input value="5 mm" aria-label="Radius"><span class="g"><ui-icon name="tangent"></ui-icon>Tangent (G1)</span></div>
      <div class="tools"><button aria-label="Add"><ui-icon name="add"></ui-icon></button><button aria-label="Remove"><ui-icon name="remove"></ui-icon></button></div>
    </div>
    <div class="row"><span>Radius Type</span><option-select icon="sconst" value="Constant" label="Radius Type"></option-select></div>
    <div class="row"><span>Edges/Faces/Features</span><button class="pick"><ui-icon name="pointer"></ui-icon>Select</button></div>
    <div class="row"><label for="chain">Tangent Chain</label><input class="check" id="chain" type="checkbox" checked></div>
    <div class="row"><label for="weight">Tangency Weight</label><input class="num" id="weight" value="1.000"></div>
  </div>
  <div class="rule"></div>
  <div class="form"><div class="row"><span>Corner Type</span><option-select icon="ball" value="Rolling Ball" label="Corner Type"></option-select></div></div>
  <div class="foot"><ui-icon name="info"></ui-icon><button>OK</button><button>Cancel</button></div>
  <ui-icon class="cur" name="cursor"></ui-icon>`);

define('view-port', `
  :host { flex: 1; min-height: 0; display: grid; grid-template: minmax(0, 1fr) / 1fr auto 1fr; background: #fefefe; position: relative; }
  model-view { position: absolute; inset: 0; }
  .col { display: flex; flex-direction: column; justify-content: space-between; position: relative; }
  .left { padding: 5px 0 3px 3px; }
  .left panel-header { width: 234px; }
  nav-bar { align-self: end; margin-bottom: 4px; position: relative; }
  .right { padding: 12px 4px 5px 0; align-items: flex-end; }
  .dock { width: 312px; }
  view-cube { width: 60px; margin: 0 6px 0 auto; }
  .status { display: flex; align-items: center; gap: 14px; font-weight: bold; color: #222; padding-right: 5px; }
  value-box { position: absolute; left: calc(50% + 118px); top: 50%; }
`, `
  <model-view></model-view>
  <div class="col left">
    <browser-panel></browser-panel>
    <panel-header>COMMENTS<button slot="end" aria-label="Add comment"><ui-icon name="plusdot"></ui-icon></button></panel-header>
  </div>
  <nav-bar></nav-bar>
  <div class="col right">
    <div class="dock"><view-cube></view-cube><fillet-panel></fillet-panel></div>
    <div class="status">2 Edges<ui-icon name="badge"></ui-icon></div>
  </div>
  <value-box></value-box>`);

define('time-line', `
  :host { display: flex; box-sizing: border-box; height: 39px; flex: none; background: #f1f1f1; border-top: 1px solid #e4e4e4; padding: 0 11px 0 7px; align-items: center; }
  .play { display: flex; justify-content: space-between; width: 90px; margin-right: 15px; }
  .play button { width: 12px; }
  .track { position: relative; display: flex; flex-direction: column; }
  .bar { height: 5px; background: #f3a9b2; margin-right: 6px; }
  .steps { display: flex; gap: 5px; padding: 1px 6px 0 1px; }
  .ticks { display: block; }
  .mark { position: absolute; left: 68px; top: 1px; }
  .set { margin-left: auto; }
`, `
  <div class="play">
    <button aria-label="First"><ui-icon name="first"></ui-icon></button><button aria-label="Previous"><ui-icon name="prev"></ui-icon></button>
    <button aria-label="Play"><ui-icon name="play"></ui-icon></button><button aria-label="Next"><ui-icon name="next"></ui-icon></button>
    <button aria-label="Last"><ui-icon name="last"></ui-icon></button>
  </div>
  <div class="track">
    <div class="bar"></div>
    <div class="steps"><ui-icon name="tsketch"></ui-icon><ui-icon name="textrude"></ui-icon><ui-icon name="tsketch"></ui-icon><ui-icon name="textrude"></ui-icon></div>
    <svg class="ticks" width="70" height="6" viewBox="0 0 70 6"><path d="M8.500 0v4.500h56V0M26.500 1v3.500M45.500 1v3.500" fill="none" stroke="#aaa"/></svg>
    <svg class="mark" width="12" height="26" viewBox="0 0 12 26"><path d="M1 1h10v4L7 8v17H5V8L1 5z" fill="#555"/></svg>
  </div>
  <button class="set" aria-label="Settings"><ui-icon name="gear"></ui-icon></button>`);

define('fusion-app', `
  :host { flex: 1; display: flex; flex-direction: column; min-height: 0; background: #fff; }
`, `
  <title-bar>Untitled* (A TEAM) - Autodesk Fusion</title-bar>
  <tab-strip></tab-strip>
  <tool-ribbon></tool-ribbon>
  <view-port></view-port>
  <time-line></time-line>`);
</script>
</body>
</html>
